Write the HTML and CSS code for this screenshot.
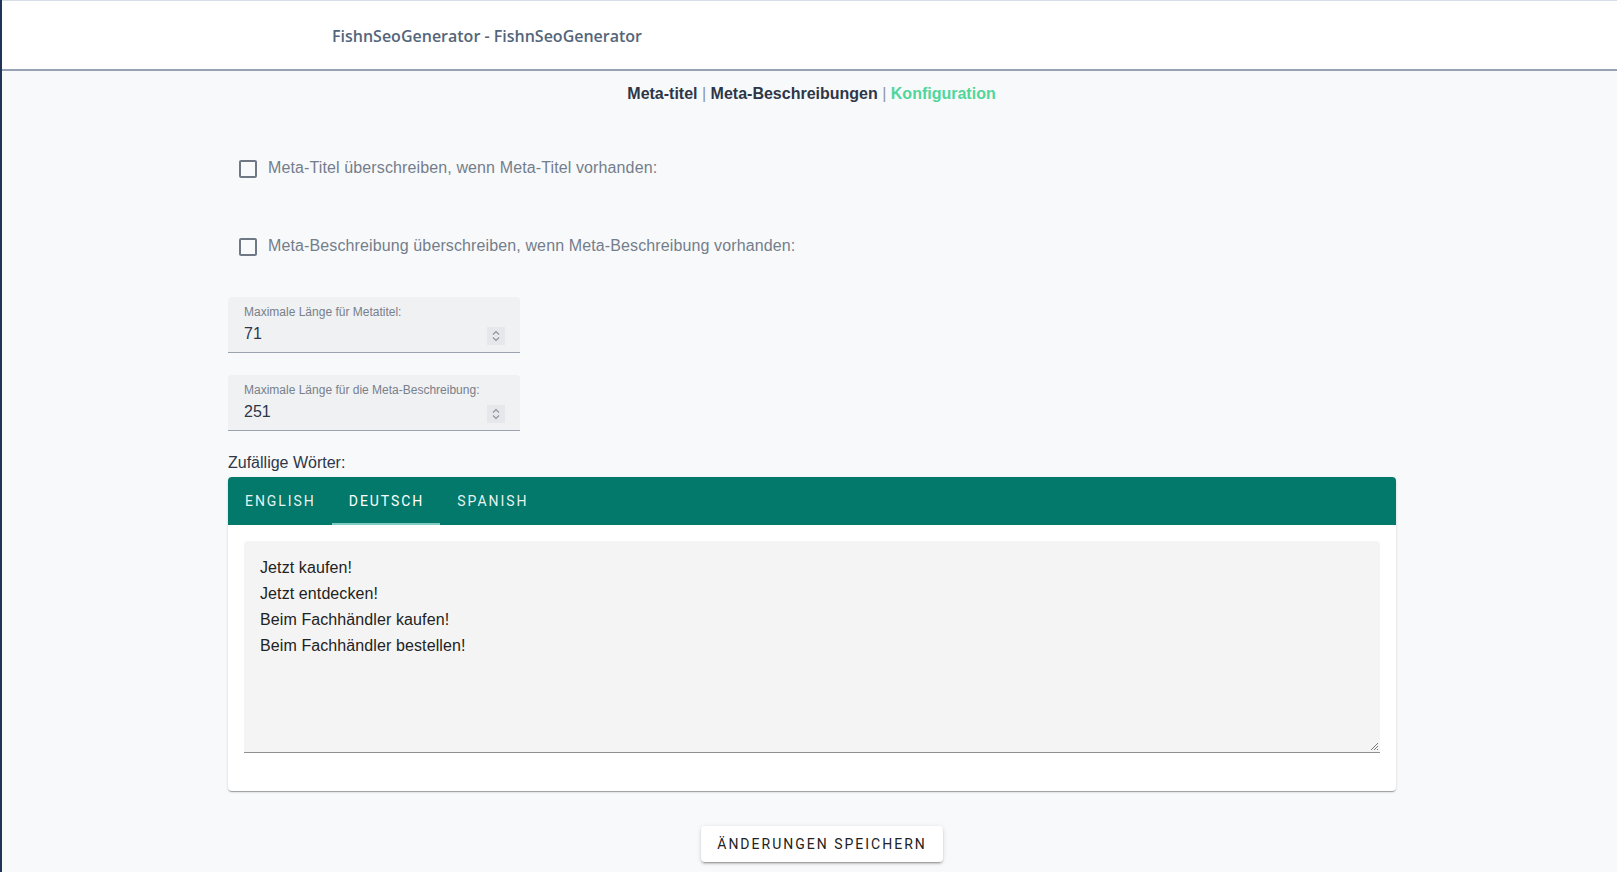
FILE: index.html
```html
<!DOCTYPE html>
<html lang="de">
<head>
<meta charset="utf-8">
<title>FishnSeoGenerator</title>
<link rel="stylesheet" href="styles.css">
</head>
<body>
<div class="app">
  <header class="topbar">
    <div class="brand">FishnSeoGenerator - FishnSeoGenerator</div>
  </header>
  <nav class="subnav">
    <a class="nav-link">Meta-titel</a> <span class="sep">|</span> <a class="nav-link">Meta-Beschreibungen</a> <span class="sep">|</span> <a class="nav-link active">Konfiguration</a>
  </nav>
  <main class="content">
    <label class="check-row first">
      <span class="checkbox"></span>
      <span class="check-label">Meta-Titel überschreiben, wenn Meta-Titel vorhanden:</span>
    </label>
    <label class="check-row second">
      <span class="checkbox"></span>
      <span class="check-label">Meta-Beschreibung überschreiben, wenn Meta-Beschreibung vorhanden:</span>
    </label>

    <div class="field first-field">
      <div class="field-label">Maximale Länge für Metatitel:</div>
      <div class="field-row">
        <span class="field-value">71</span>
        <span class="spinner"><svg width="10" height="14" viewBox="0 0 10 14"><path d="M2 5.5 L5 2.5 L8 5.5 M2 8.5 L5 11.5 L8 8.5" fill="none" stroke="#8a919c" stroke-width="1.1"/></svg></span>
      </div>
    </div>
    <div class="field second-field">
      <div class="field-label">Maximale Länge für die Meta-Beschreibung:</div>
      <div class="field-row">
        <span class="field-value">251</span>
        <span class="spinner"><svg width="10" height="14" viewBox="0 0 10 14"><path d="M2 5.5 L5 2.5 L8 5.5 M2 8.5 L5 11.5 L8 8.5" fill="none" stroke="#8a919c" stroke-width="1.1"/></svg></span>
      </div>
    </div>

    <div class="words-label">Zufällige Wörter:</div>
    <section class="card">
      <div class="tabs">
        <div class="tab">English</div>
        <div class="tab active">Deutsch</div>
        <div class="tab">Spanish</div>
      </div>
      <div class="card-body">
        <div class="textarea">
          <div class="line">Jetzt kaufen!</div>
          <div class="line">Jetzt entdecken!</div>
          <div class="line">Beim Fachhändler kaufen!</div>
          <div class="line">Beim Fachhändler bestellen!</div>
          <svg class="grip" width="10" height="10" viewBox="0 0 10 10"><path d="M9 2 L2 9 M9 5 L5 9 M9 8 L8 9" stroke="#777" stroke-width="1" fill="none"/></svg>
        </div>
      </div>
    </section>
    <div class="actions">
      <button class="save-btn">Änderungen speichern</button>
    </div>
  </main>
</div>
</body>
</html>
```

FILE: styles.css
```css
* { box-sizing: border-box; }
html, body { margin: 0; padding: 0; }
body {
  background: #f8f9fb;
  font-family: "Liberation Sans", Arial, sans-serif;
  color: #2d3748;
}
.app {
  min-height: 872px;
  border-left: 2px solid #1f3556;
  overflow: hidden;
}
.topbar {
  height: 71px;
  background: #ffffff;
  border-top: 1px solid #d5dde6;
  border-bottom: 2px solid #97a3b2;
  display: flex;
  align-items: center;
  padding-left: 330px;
}
.brand {
  font-family: "Open Sans", "Noto Sans", sans-serif;
  font-weight: 600;
  font-size: 16px;
  color: #54657a;
  margin-top: 1px;
}
.subnav {
  margin-top: 13px;
  height: 20px;
  line-height: 20px;
  text-align: center;
  font-size: 16px;
  padding-left: 4px;
}
.nav-link {
  font-weight: 700;
  color: #2d3748;
}
.nav-link.active { color: #4fd69c; }
.sep { color: #8a94a3; }
.content {
  width: 1168px;
  margin-left: 226px;
}
.check-row {
  display: flex;
  align-items: center;
  height: 24px;
  padding-left: 11px;
}
.check-row.first { margin-top: 52px; }
.check-row.second { margin-top: 54px; }
.checkbox {
  width: 18px;
  height: 18px;
  border: 2px solid #6f7985;
  border-radius: 2px;
  flex: none;
  margin-top: 2px;
}
.check-label {
  margin-left: 11px;
  font-size: 16px;
  letter-spacing: 0.12px;
  color: #747e8b;
}
.field {
  width: 292px;
  height: 56px;
  background: #f0f1f3;
  border-radius: 4px 4px 0 0;
  border-bottom: 1px solid #9aa3ae;
  padding: 8px 16px 0 16px;
}
.first-field { margin-top: 39px; }
.second-field { margin-top: 22px; }
.field-label {
  font-size: 12px;
  color: #77808b;
  line-height: 14px;
}
.field-row {
  display: flex;
  align-items: center;
  justify-content: space-between;
  margin-top: 5px;
  height: 20px;
}
.field-value {
  font-size: 16px;
  color: #2d3748;
}
.spinner {
  width: 18px;
  height: 18px;
  background: #e6e7ea;
  display: flex;
  align-items: center;
  justify-content: center;
  margin-right: -1px;
  margin-top: 3px;
}
.words-label {
  margin-top: 22px;
  height: 20px;
  line-height: 20px;
  font-size: 16px;
  color: #2d3748;
}
.card {
  margin-top: 4px;
  background: #ffffff;
  border-radius: 4px;
  box-shadow: 0 2px 1px -1px rgba(0,0,0,0.2), 0 1px 1px 0 rgba(0,0,0,0.14), 0 1px 3px 0 rgba(0,0,0,0.12);
  overflow: hidden;
}
.tabs {
  height: 48px;
  background: #02796b;
  display: flex;
}
.tab {
  font-family: Roboto, "Liberation Sans", sans-serif;
  font-weight: 400;
  font-size: 14px;
  letter-spacing: 1.95px;
  text-transform: uppercase;
  color: rgba(255,255,255,0.92);
  padding: 0 16px 0 17px;
  display: flex;
  align-items: center;
  height: 48px;
}
.tab.active {
  color: #ffffff;
  box-shadow: inset 0 -2px 0 #80cbc4;
}
.card-body {
  padding: 16px 16px 38px 16px;
}
.textarea {
  position: relative;
  height: 212px;
  background: #f4f4f4;
  border-radius: 4px 4px 0 0;
  border-bottom: 1px solid #8f8f8f;
  padding: 14px 16px 0 16px;
  font-size: 16px;
  letter-spacing: 0.1px;
  color: #222;
  line-height: 26px;
}
.grip {
  position: absolute;
  right: 1px;
  bottom: 1px;
}
.actions {
  margin-top: 35px;
  padding-left: 473px;
}
.save-btn {
  width: 242px;
  height: 36px;
  background: #ffffff;
  border: none;
  border-radius: 4px;
  box-shadow: 0 3px 1px -2px rgba(0,0,0,0.2), 0 2px 2px 0 rgba(0,0,0,0.14), 0 1px 5px 0 rgba(0,0,0,0.12);
  font-family: Roboto, "Liberation Sans", sans-serif;
  font-weight: 400;
  font-size: 14px;
  letter-spacing: 2px;
  text-transform: uppercase;
  color: #222;
  padding: 0;
}
```
